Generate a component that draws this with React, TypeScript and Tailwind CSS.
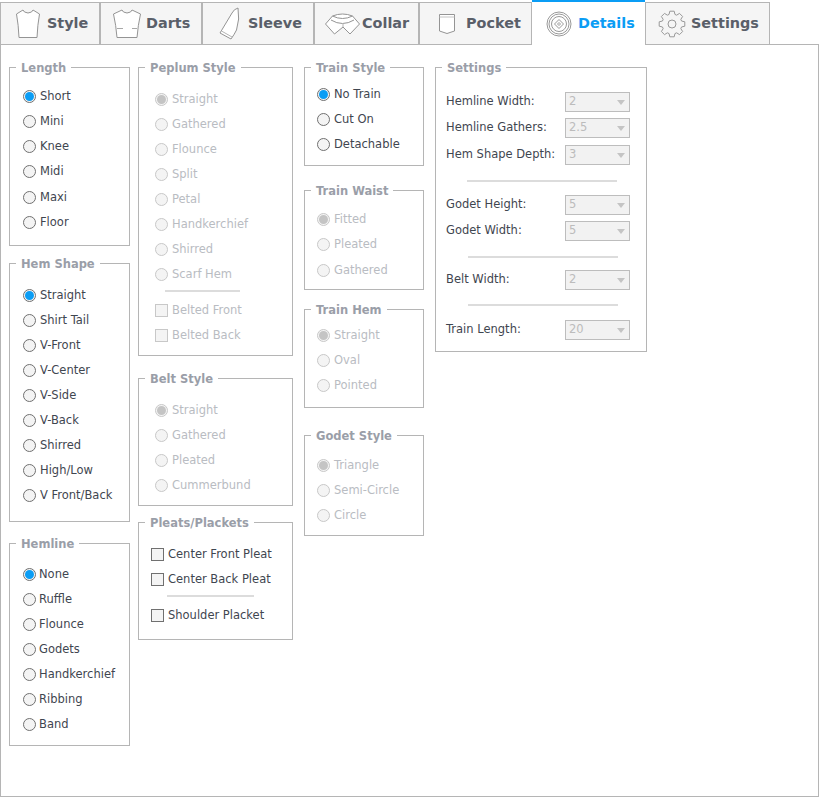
import React from "react";

const ShirtIcon = () => (
  <svg width="24" height="29" viewBox="0 0 24 29" fill="#fff" stroke="#949494" strokeWidth="1">
    <path d="M7 1 L0.5 5 Q2.5 16 3 28.5 H21 Q21.5 16 23.5 5 L17 1 L15.5 3 Q12 5 8.5 3 Z" />
  </svg>
);

const DartsIcon = () => (
  <svg width="28" height="29" viewBox="0 0 28 29" fill="#fff" stroke="#949494" strokeWidth="1">
    <path d="M9 1 L0.5 5 Q3 16 4 28.5 H24 Q25 16 27.5 5 L19 1 L17.5 3 Q14 5 10.5 3 Z" />
    <path d="M4 19.5 H10 M24 19.5 H19" stroke="#a8a8a8" />
  </svg>
);

const SleeveIcon = () => (
  <svg width="22" height="33" viewBox="0 0 22 33" fill="#fff" stroke="#949494" strokeWidth="1">
    <path d="M19 1 Q15 2 13 6 L1 26 L12 32 Q15 28 17.5 23 Q21 12 19 1 Z" />
    <path d="M2.5 24 L13 30" stroke="#b4b4b4" />
  </svg>
);

const CollarIcon = () => (
  <svg width="35" height="22" viewBox="0 0 35 22" fill="#fff" stroke="#949494" strokeWidth="1">
    <path d="M7.5 3 Q17.5 -1 27.5 3 L34.5 11 L25 21 L18 14 L9.5 21 L0.5 11 Z" />
    <path d="M7.5 3 Q17.5 8 27.5 3 M6 7 Q17.5 14 29 7" fill="none" />
    <path d="M18 14 V10" fill="none" stroke="#b4b4b4" />
  </svg>
);

const PocketIcon = () => (
  <svg width="18" height="22" viewBox="0 0 18 22" fill="#fff" stroke="#949494" strokeWidth="1">
    <path d="M1.5 1.5 H16.5 V18 L9 20.5 L1.5 18 Z" />
    <path d="M1.5 4 H16.5" stroke="#c4c4c4" />
  </svg>
);

const DetailsIcon = () => (
  <svg width="26" height="26" viewBox="0 0 26 26" fill="none" stroke="#999" strokeWidth="1">
    <circle cx="13" cy="13" r="12" />
    <circle cx="13" cy="13" r="10" />
    <circle cx="13" cy="13" r="7.5" />
    <path d="M13 8.5 L17.5 13 L13 17.5 L8.5 13 Z" />
    <path d="M13 11.5 L14.5 13 L13 14.5 L11.5 13 Z" />
  </svg>
);

// 8 toothed gear outline
const gearPath = () => {
  const pts: string[] = [];
  for (let i = 0; i < 8; i++) {
    const a = (i * Math.PI) / 4;
    [[10, -0.3], [13, -0.17], [13, 0.17], [10, 0.3]].forEach(([r, o]) => {
      pts.push(`${(14 + r * Math.cos(a + o)).toFixed(2)} ${(14 + r * Math.sin(a + o)).toFixed(2)}`);
    });
  }
  return `M${pts.join(" L")} Z`;
};

const GearIcon = () => (
  <svg width="28" height="28" viewBox="0 0 28 28" fill="none" stroke="#999" strokeWidth="1" strokeLinejoin="round">
    <path d={gearPath()} />
    <circle cx="14" cy="14" r="4" />
  </svg>
);

const tabs = [
  { label: "Style", icon: <ShirtIcon />, cls: "w-[100px] pl-[15px] gap-[7px]" },
  { label: "Darts", icon: <DartsIcon />, cls: "w-[102px] pl-[12px] gap-[5px]" },
  { label: "Sleeve", icon: <SleeveIcon />, cls: "w-[112px] pl-[16px] gap-[7px]" },
  { label: "Collar", icon: <CollarIcon />, cls: "w-[105px] pl-[10px] gap-[2px]" },
  { label: "Pocket", icon: <PocketIcon />, cls: "w-[113px] pl-[18px] gap-[10px]" },
  { label: "Details", icon: <DetailsIcon />, cls: "w-[113px] pl-[14px] gap-[6px]", active: true },
  { label: "Settings", icon: <GearIcon />, cls: "w-[125px] pl-[12px] gap-[5px]" },
];

const Radio = ({ label, checked, disabled, labelCls = "" }: { label: string; checked?: boolean; disabled?: boolean; labelCls?: string }) => (
  <label className={`flex h-[25px] items-center gap-[4px] ${disabled ? "text-[#b9bcc2]" : "text-[#3f4650]"}`}>
    <span
      className={`flex h-[13px] w-[13px] shrink-0 items-center justify-center rounded-full border bg-[#f4f4f4] ${
        disabled ? "border-[#c8c8c8]" : "border-[#707070]"
      }`}
    >
      {checked && <span className={`h-[9px] w-[9px] rounded-full ${disabled ? "bg-[#c4c4c4]" : "bg-[#0a9df5]"}`} />}
    </span>
    <span className={labelCls}>{label}</span>
  </label>
);

const Check = ({ label, disabled }: { label: string; disabled?: boolean }) => (
  <label className={`flex h-[25px] items-center gap-[4px] ${disabled ? "text-[#b9bcc2]" : "text-[#3f4650]"}`}>
    <span className={`h-[13px] w-[13px] shrink-0 border bg-[#f4f4f4] ${disabled ? "border-[#c8c8c8]" : "border-[#707070]"}`} />
    <span>{label}</span>
  </label>
);

const Group = ({ title, cls = "", pad, children }: { title: string; cls?: string; pad: string; children: React.ReactNode }) => (
  <fieldset className={`border border-[#b5b5b5] ${cls}`}>
    <legend className="ml-[6px] px-[5px] pt-[2px] text-[11.5px] leading-[12px] font-bold text-[#9a9ea8]">{title}</legend>
    <div className={pad}>{children}</div>
  </fieldset>
);

const Divider = ({ cls }: { cls: string }) => <div className={`h-[2px] bg-[#dcdcdc] ${cls}`} />;

const SelectRow = ({ label, value, cls = "" }: { label: string; value: string; cls?: string }) => (
  <div className={`flex h-[20px] items-center justify-between text-[#3f4650] ${cls}`}>
    <span>{label}</span>
    <div className="relative">
      <select
        disabled
        defaultValue={value}
        className="block h-[20px] w-[65px] appearance-none border border-[#bdbdbd] bg-[#f2f2f2] pl-[3px] text-[11.5px] text-[#bcbcbc] opacity-100"
      >
        <option>{value}</option>
      </select>
      <span className="absolute top-[8px] right-[5px] h-0 w-0 border-x-[4px] border-t-[5px] border-x-transparent border-t-[#c4c4c4]" />
    </div>
  </div>
);

const radios = (names: string[], disabled?: boolean, labelCls?: string) =>
  names.map((n, i) => <Radio key={n} label={n} checked={i === 0} disabled={disabled} labelCls={labelCls} />);

export default function App() {
  return (
    <div className="h-[797px] w-[819px] overflow-hidden bg-white font-['DejaVu_Sans',sans-serif] text-[11.5px]">
      <div className="relative z-10 flex h-[45px]">
        {tabs.map((t) => (
          <div
            key={t.label}
            className={`flex items-center ${t.cls} ${
              t.active
                ? "h-[45px] border-t-[2px] border-[#0a9df5] bg-white text-[#0a9df5]"
                : "mt-[2px] h-[43px] border border-[#b5b5b5] bg-[#f5f5f5] text-[#5a5f69]"
            }`}
          >
            {t.icon}
            <span className="pt-px text-[14.4px] font-bold">{t.label}</span>
          </div>
        ))}
      </div>
      <div className="-mt-px flex h-[753px] items-start border border-[#b5b5b5] pt-[15px] pl-[8px]">
        <div className="flex w-[121px] flex-col">
          <Group title="Length" pad="pt-[10px] pb-[10px] pl-[13px] [&>*:nth-child(5)]:mt-px">
            {radios(["Short", "Mini", "Knee", "Midi", "Maxi", "Floor"])}
          </Group>
          <Group title="Hem Shape" cls="mt-[10px]" pad="pt-[13px] pb-[13px] pl-[13px]">
            {radios(["Straight", "Shirt Tail", "V-Front", "V-Center", "V-Side", "V-Back", "Shirred", "High/Low", "V Front/Back"])}
          </Group>
          <Group title="Hemline" cls="mt-[14px]" pad="pt-[12px] pb-[8px] pl-[13px]">
            {radios(["None", "Ruffle", "Flounce", "Godets", "Handkerchief", "Ribbing", "Band"], false, "-ml-px")}
          </Group>
        </div>
        <div className="ml-[8px] flex w-[155px] flex-col">
          <Group title="Peplum Style" pad="pt-[13px] pb-[7px] pl-[16px]">
            {radios(["Straight", "Gathered", "Flounce", "Split", "Petal", "Handkerchief", "Shirred", "Scarf Hem"], true)}
            <Divider cls="mt-[3px] mb-[6px] ml-[10px] w-[75px]" />
            <Check label="Belted Front" disabled />
            <Check label="Belted Back" disabled />
          </Group>
          <Group title="Belt Style" cls="mt-[15px]" pad="pt-[13px] pb-[7px] pl-[16px]">
            {radios(["Straight", "Gathered", "Pleated", "Cummerbund"], true)}
          </Group>
          <Group title="Pleats/Plackets" cls="mt-[9px]" pad="pt-[13px] pb-[11px] pl-[12px]">
            <Check label="Center Front Pleat" />
            <Check label="Center Back Pleat" />
            <Divider cls="mt-[3px] mb-[6px] ml-[16px] w-[87px]" />
            <Check label="Shoulder Placket" />
          </Group>
        </div>
        <div className="ml-[11px] flex w-[120px] flex-col">
          <Group title="Train Style" pad="pt-[8px] pb-[8px] pl-[12px]">
            {radios(["No Train", "Cut On", "Detachable"])}
          </Group>
          <Group title="Train Waist" cls="mt-[17px]" pad="pt-[10px] pb-[6px] pl-[12px] [&>*:nth-child(3)]:mt-px">
            {radios(["Fitted", "Pleated", "Gathered"], true)}
          </Group>
          <Group title="Train Hem" cls="mt-[12px]" pad="pt-[7px] pb-[9px] pl-[12px]">
            {radios(["Straight", "Oval", "Pointed"], true)}
          </Group>
          <Group title="Godet Style" cls="mt-[20px]" pad="pt-[11px] pb-[7px] pl-[12px]">
            {radios(["Triangle", "Semi-Circle", "Circle"], true)}
          </Group>
        </div>
        <div className="ml-[11px] w-[212px]">
          <Group title="Settings" pad="pt-[18px] pr-[16px] pb-[11px] pl-[10px]">
            <SelectRow label="Hemline Width:" value="2" />
            <SelectRow label="Hemline Gathers:" value="2.5" cls="mt-[6px]" />
            <SelectRow label="Hem Shape Depth:" value="3" cls="mt-[7px]" />
            <Divider cls="mt-[15px] ml-[21px] w-[150px]" />
            <SelectRow label="Godet Height:" value="5" cls="mt-[13px]" />
            <SelectRow label="Godet Width:" value="5" cls="mt-[6px]" />
            <Divider cls="mt-[15px] ml-[22px] w-[150px]" />
            <SelectRow label="Belt Width:" value="2" cls="mt-[12px]" />
            <Divider cls="mt-[14px] ml-[22px] w-[150px]" />
            <SelectRow label="Train Length:" value="20" cls="mt-[14px]" />
          </Group>
        </div>
      </div>
    </div>
  );
}
